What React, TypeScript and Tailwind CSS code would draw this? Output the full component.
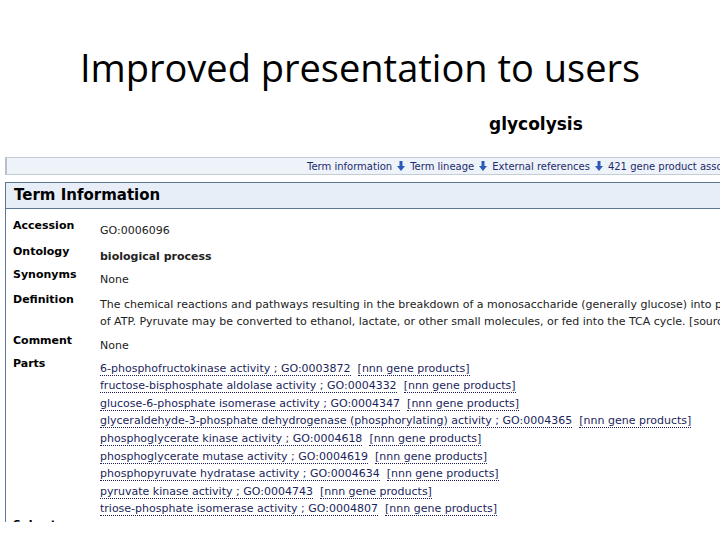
import React from "react";

const parts: [string, string][] = [
  ["6-phosphofructokinase activity", "GO:0003872"],
  ["fructose-bisphosphate aldolase activity", "GO:0004332"],
  ["glucose-6-phosphate isomerase activity", "GO:0004347"],
  ["glyceraldehyde-3-phosphate dehydrogenase (phosphorylating) activity", "GO:0004365"],
  ["phosphoglycerate kinase activity", "GO:0004618"],
  ["phosphoglycerate mutase activity", "GO:0004619"],
  ["phosphopyruvate hydratase activity", "GO:0004634"],
  ["pyruvate kinase activity", "GO:0004743"],
  ["triose-phosphate isomerase activity", "GO:0004807"],
];

function Arrow() {
  return (
    <svg width="8" height="10" viewBox="0 0 8 10" className="inline-block mx-[5px] align-[-1px]">
      <rect x="2.5" y="0" width="3" height="5" fill="#2b5bb8" />
      <polygon points="0,5 8,5 4,10" fill="#2b5bb8" />
    </svg>
  );
}

function Row({ label, children, top = "pt-[8px]" }: { label: string; children: React.ReactNode; top?: string }) {
  return (
    <div className={`flex ${top}`}>
      <div className="w-[87px] shrink-0 font-bold text-black text-[11px] leading-[14px]">{label}</div>
      <div className="pt-[3px] text-[#222] text-[11px] leading-[17.6px]">{children}</div>
    </div>
  );
}

export default function App() {
  return (
    <div
      className="w-[720px] h-[540px] overflow-hidden bg-white relative"
      style={{ fontFamily: '"DejaVu Sans", Verdana, sans-serif' }}
    >
      <div
        className="pt-[37px] text-center text-[38px] leading-[60px] text-black whitespace-nowrap"
        style={{ fontFamily: '"Open Sans", "Noto Sans", sans-serif' }}
      >
        Improved presentation to users
      </div>
      <div className="pl-[489px] pt-[15px] text-[17px] leading-[24px] font-bold text-black whitespace-nowrap">
        glycolysis
      </div>
      <div className="ml-[5px] mt-[21px] h-[18px] w-[900px] bg-[#eef2f9] border border-[#c4ccd6] border-l-[2px] border-l-[#b8bfc7] flex items-center pl-[300px] text-[10px] text-[#1c2b6e] whitespace-nowrap">
        <span>Term information</span>
        <Arrow />
        <span>Term lineage</span>
        <Arrow />
        <span>External references</span>
        <Arrow />
        <span>421 gene product associations</span>
      </div>
      <div className="ml-[5px] mt-[7px] w-[900px] h-[340px] border-l border-[#5d7893] overflow-hidden">
        <div className="h-[27px] bg-[#e7eef8] border-y border-[#5d7893] flex items-center pl-[8px] text-[15px] font-bold text-black">
          Term Information
        </div>
        <div className="pl-[7px] whitespace-nowrap">
          <Row label="Accession" top="pt-[10px]">GO:0006096</Row>
          <Row label="Ontology" top="pt-[5px]">
            <span className="font-bold">biological process</span>
          </Row>
          <Row label="Synonyms" top="pt-[3px]">None</Row>
          <Row label="Definition" top="pt-[4px]">
            <div>
              The chemical reactions and pathways resulting in the breakdown of a monosaccharide (generally glucose) into pyruvate, with the concomitant production of a small amount
            </div>
            <div>
              of ATP. Pyruvate may be converted to ethanol, lactate, or other small molecules, or fed into the TCA cycle. [source: ISBN:0201090910]
            </div>
          </Row>
          <Row label="Comment" top="pt-[3px]">None</Row>
          <Row label="Parts" top="pt-[2px]">
            {parts.map(([name, id]) => (
              <div key={id} className="text-[#1c1f5c]">
                <span className="border-b border-dotted border-[#1c1f5c]">
                  {name} ; {id}
                </span>
                <span className="ml-[7px] border-b border-dotted border-[#1c1f5c]">[nnn gene products]</span>
              </div>
            ))}
          </Row>
          <Row label="Subset" top="pt-[0px]">None</Row>
        </div>
      </div>
    </div>
  );
}
